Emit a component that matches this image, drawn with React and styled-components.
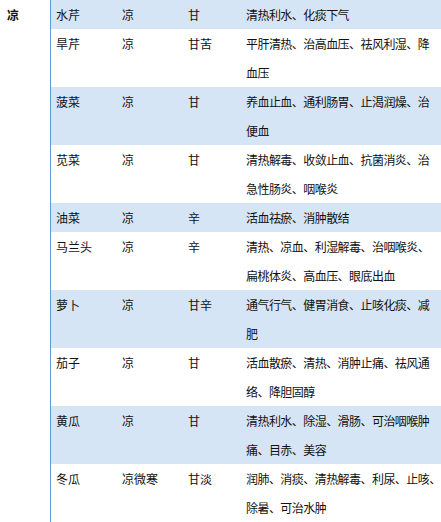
import React from "react";
import styled, { createGlobalStyle } from "styled-components";

const GlobalStyle = createGlobalStyle`
  html, body {
    margin: 0;
    padding: 0;
    background: #fff;
  }
  body {
    font-family: "Noto Sans CJK SC", "Noto Sans", sans-serif;
    font-size: 12px;
    color: #111;
  }
`;

// effect text is kept split the way the source table wraps it
const rows = [
  ["水芹", "凉", "甘", ["清热利水、化痰下气"]],
  ["旱芹", "凉", "甘苦", ["平肝清热、治高血压、祛风利湿、降", "血压"]],
  ["菠菜", "凉", "甘", ["养血止血、通利肠胃、止渴润燥、治", "便血"]],
  ["苋菜", "凉", "甘", ["清热解毒、收敛止血、抗菌消炎、治", "急性肠炎、咽喉炎"]],
  ["油菜", "凉", "辛", ["活血祛瘀、消肿散结"]],
  ["马兰头", "凉", "辛", ["清热、凉血、利湿解毒、治咽喉炎、", "扁桃体炎、高血压、眼底出血"]],
  ["萝卜", "凉", "甘辛", ["通气行气、健胃消食、止咳化痰、减", "肥"]],
  ["茄子", "凉", "甘", ["活血散瘀、清热、消肿止痛、祛风通", "络、降胆固醇"]],
  ["黄瓜", "凉", "甘", ["清热利水、除湿、滑肠、可治咽喉肿", "痛、目赤、美容"]],
  ["冬瓜", "凉微寒", "甘淡", ["润肺、消痰、清热解毒、利尿、止咳、", "除暑、可治水肿"]],
];

const Page = () => {
  return (
    <Wrapper>
      <GlobalStyle />
      <Category>凉</Category>
      <Table>
        {rows.map((r, i) => (
          <Row key={r[0]} shaded={i % 2 === 0}>
            <Cell>{r[0]}</Cell>
            <Cell>{r[1]}</Cell>
            <Cell>{r[2]}</Cell>
            <Effect>
              {r[3].map((line) => (
                <Line key={line}>{line}</Line>
              ))}
            </Effect>
          </Row>
        ))}
      </Table>
    </Wrapper>
  );
};

const Wrapper = styled.div`
  display: flex;
  width: 441px;
  min-height: 522px;
  overflow: hidden;
  line-height: 29px;
`;

const Category = styled.div`
  width: 43px;
  padding-left: 7px;
  border-right: 1px solid #5b9bdc;
  font-weight: bold;
  flex-shrink: 0;
`;

const Table = styled.div`
  flex: 1;
  display: flex;
  flex-direction: column;
`;

const Row = styled.div.withConfig({
  shouldForwardProp: (p) => p !== "shaded",
})`
  display: grid;
  grid-template-columns: 66px 66px 58px 1fr;
  background: ${(p) => (p.shaded ? "#d6e5f5" : "#fff")};
`;

const Cell = styled.div`
  padding-left: 5px;
`;

const Effect = styled(Cell)`
  letter-spacing: -0.55px;
`;

const Line = styled.div`
  white-space: nowrap;
`;

export default function App() {
  return <Page />;
}
